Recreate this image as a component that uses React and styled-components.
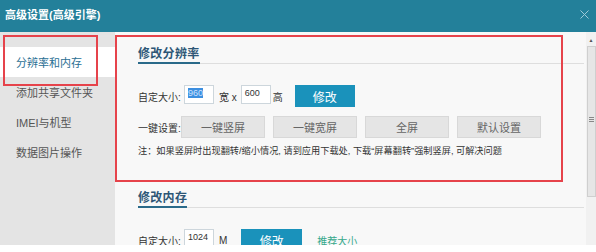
import React from "react";
import styled, { createGlobalStyle } from "styled-components";
import { X } from "lucide-react";

const Global = createGlobalStyle`
  html, body { margin: 0; padding: 0; background: #fff; }
  * { box-sizing: border-box; }
  body { font-family: "Liberation Sans", "Noto Sans CJK SC", sans-serif; }
`;

const Window = styled.div`
  width: 596px;
  height: 245px;
  display: flex;
  flex-direction: column;
  overflow: hidden;
  background: #f8f8f8;
`;

const TitleBar = styled.div`
  height: 32px;
  flex: none;
  background: #23809a;
  display: flex;
  align-items: center;
  justify-content: space-between;
  padding: 0 4px 4px 5px;
  color: #fff;
  font-size: 11px;
  font-weight: bold;
`;

const Close = styled.div`
  color: #9fcad8;
  display: flex;
`;

const Body = styled.div`
  flex: 1;
  display: flex;
  min-height: 0;
`;

const Sidebar = styled.div`
  width: 115px;
  flex: none;
  background: #e4e4e4;
  padding-top: 15px;
`;

const NavItem = styled.div`
  position: relative;
  height: 30px;
  display: flex;
  align-items: center;
  padding-left: 16px;
  font-size: 11px;
  color: ${p => (p.active ? "#2b6f94" : "#555")};
  background: ${p => (p.active ? "#fff" : "transparent")};
  ${p => p.marked && `
    &::after {
      content: "";
      position: absolute;
      left: 3px;
      top: -12px;
      width: 91px;
      height: 47px;
      border: 2px solid #e6434b;
    }
  `}
`;

const Main = styled.div`
  position: relative;
  flex: 1;
  padding: 14px 2px 0 23px;
  background: #f8f8f8;
`;

const Marker = styled.div`
  position: absolute;
  left: 0;
  top: 3px;
  width: 448px;
  height: 147px;
  border: 2px solid #e6434b;
  pointer-events: none;
`;

const HeadingRow = styled.div`
  border-bottom: 1px solid #dedede;
  display: flex;
  margin-top: ${p => p.gap || 0}px;
`;

const Heading = styled.div`
  font-size: 12px;
  font-weight: bold;
  line-height: 16px;
  color: #2d5676;
  border-bottom: 2px solid #2a6a8a;
  margin-bottom: -1px;
  letter-spacing: 0.3px;
`;

const Row = styled.div`
  display: flex;
  align-items: center;
  height: 22px;
  margin-top: ${p => p.gap}px;
  font-size: 10px;
  color: #333;
`;

const Label = styled.span`
  width: 46px;
  flex: none;
`;

const Input = styled.div`
  width: 30px;
  height: 19px;
  margin-top: -3px;
  background: #fff;
  border: 1px solid #cdd6dc;
  padding: 2px 3px;
  font-size: 9px;
  color: #333;
`;

const Selected = styled.span`
  background: #3d8fe0;
  color: #cfe3ff;
`;

const Unit = styled.span`
  margin: 0 ${p => p.right}px 0 ${p => p.left}px;
`;

const PrimaryButton = styled.div`
  width: ${p => p.w}px;
  height: 22px;
  margin-left: ${p => p.left}px;
  background: #1a92bb;
  color: #fff;
  font-size: 12px;
  display: flex;
  align-items: center;
  justify-content: center;
`;

const Presets = styled.div`
  display: flex;
  gap: 8px;
  margin-left: -3px;
`;

const GrayButton = styled.div`
  width: 84px;
  height: 22px;
  background: #e5e5e5;
  border: 1px solid #d8d8d8;
  color: #666;
  font-size: 11px;
  display: flex;
  align-items: center;
  justify-content: center;
`;

const Note = styled.div`
  margin-top: 6px;
  font-size: 9.2px;
  line-height: 14px;
  color: #333;
  white-space: nowrap;
`;

const Hint = styled.span`
  margin-left: 15px;
  color: #35a88a;
  font-size: 10px;
`;

const Scrollbar = styled.div`
  width: 10px;
  flex: none;
  background: #f1f1f1;
  display: flex;
  flex-direction: column;
  align-items: center;
  padding-top: 3px;
`;

const Arrow = styled.div`
  font-size: 5px;
  color: #555;
  height: 10px;
  line-height: 10px;
`;

const Thumb = styled.div`
  margin-top: 1px;
  width: 9px;
  height: 151px;
  background: #e6e6e6;
  border: 1px solid #cfcfcf;
  display: flex;
  align-items: center;
  justify-content: center;
  padding-bottom: 4px;
`;

const Grip = styled.div`
  width: 5px;
  height: 5px;
  border-top: 1px solid #888;
  border-bottom: 1px solid #888;
  position: relative;
  &::after {
    content: "";
    position: absolute;
    left: 0;
    right: 0;
    top: 1px;
    border-top: 1px solid #888;
  }
`;

export default function App() {
  return (
    <>
      <Global />
      <Window>
        <TitleBar>
          <span>高级设置(高级引擎)</span>
          <Close><X size={15} strokeWidth={1.6} /></Close>
        </TitleBar>
        <Body>
          <Sidebar>
            <NavItem active marked>分辨率和内存</NavItem>
            <NavItem>添加共享文件夹</NavItem>
            <NavItem>IMEI与机型</NavItem>
            <NavItem>数据图片操作</NavItem>
          </Sidebar>
          <Main>
            <Marker />
            <HeadingRow>
              <Heading>修改分辨率</Heading>
            </HeadingRow>
            <Row gap={21}>
              <Label>自定大小:</Label>
              <Input><Selected>960</Selected></Input>
              <Unit left={5} right={4}>宽 x</Unit>
              <Input>600</Input>
              <Unit left={2} right={0}>高</Unit>
              <PrimaryButton w={60} left={12}>修改</PrimaryButton>
            </Row>
            <Row gap={9}>
              <Label>一键设置:</Label>
              <Presets>
                <GrayButton>一键竖屏</GrayButton>
                <GrayButton>一键宽屏</GrayButton>
                <GrayButton>全屏</GrayButton>
                <GrayButton>默认设置</GrayButton>
              </Presets>
            </Row>
            <Note>注：如果竖屏时出现翻转/缩小情况, 请到应用下载处, 下载“屏幕翻转”强制竖屏, 可解决问题</Note>
            <HeadingRow gap={32}>
              <Heading>修改内存</Heading>
            </HeadingRow>
            <Row gap={21}>
              <Label>自定大小:</Label>
              <Input>1024</Input>
              <Unit left={5} right={0}>M</Unit>
              <PrimaryButton w={61} left={14}>修改</PrimaryButton>
              <Hint>推荐大小</Hint>
            </Row>
          </Main>
          <Scrollbar>
            <Arrow>▲</Arrow>
            <Thumb><Grip /></Thumb>
          </Scrollbar>
        </Body>
      </Window>
    </>
  );
}
